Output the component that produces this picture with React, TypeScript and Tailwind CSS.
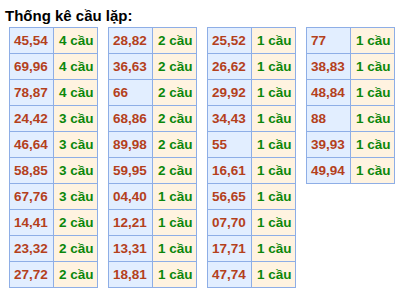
import React from "react";

type Row = [string, number];

const tables: Row[][] = [
  [
    ["45,54", 4],
    ["69,96", 4],
    ["78,87", 4],
    ["24,42", 3],
    ["46,64", 3],
    ["58,85", 3],
    ["67,76", 3],
    ["14,41", 2],
    ["23,32", 2],
    ["27,72", 2],
  ],
  [
    ["28,82", 2],
    ["36,63", 2],
    ["66", 2],
    ["68,86", 2],
    ["89,98", 2],
    ["59,95", 2],
    ["04,40", 1],
    ["12,21", 1],
    ["13,31", 1],
    ["18,81", 1],
  ],
  [
    ["25,52", 1],
    ["26,62", 1],
    ["29,92", 1],
    ["34,43", 1],
    ["55", 1],
    ["16,61", 1],
    ["56,65", 1],
    ["07,70", 1],
    ["17,71", 1],
    ["47,74", 1],
  ],
  [
    ["77", 1],
    ["38,83", 1],
    ["48,84", 1],
    ["88", 1],
    ["39,93", 1],
    ["49,94", 1],
  ],
];

export default function App() {
  return (
    <div
      className="w-[396px] h-[299px] bg-white overflow-hidden"
      style={{ fontFamily: '"Liberation Sans", Arial, sans-serif' }}
    >
      <div className="pl-[5px] pt-[7px] h-[27px] text-[15px] leading-[18px] font-bold text-black">
        Thống kê cầu lặp:
      </div>
      <div className="flex items-start gap-[10px] pl-[9px]">
        {tables.map((rows, ti) => (
          <div
            key={ti}
            className="grid grid-cols-[44px_44px] border-l border-t border-[#8eaee6]"
          >
            {rows.map(([pair, n], ri) => (
              <React.Fragment key={ri}>
                <div className="h-[26px] border-r border-b border-[#8eaee6] bg-[#e2eeff] pl-[4px] pt-[1px] text-[13.5px] leading-[24px] font-bold text-[#b4401c] whitespace-nowrap">
                  {pair}
                </div>
                <div className="h-[26px] border-r border-b border-[#8eaee6] bg-[#fff3e0] pl-[5px] pt-[1px] text-[13.5px] leading-[24px] font-bold text-[#0b870b] whitespace-nowrap">
                  {n} cầu
                </div>
              </React.Fragment>
            ))}
          </div>
        ))}
      </div>
    </div>
  );
}
